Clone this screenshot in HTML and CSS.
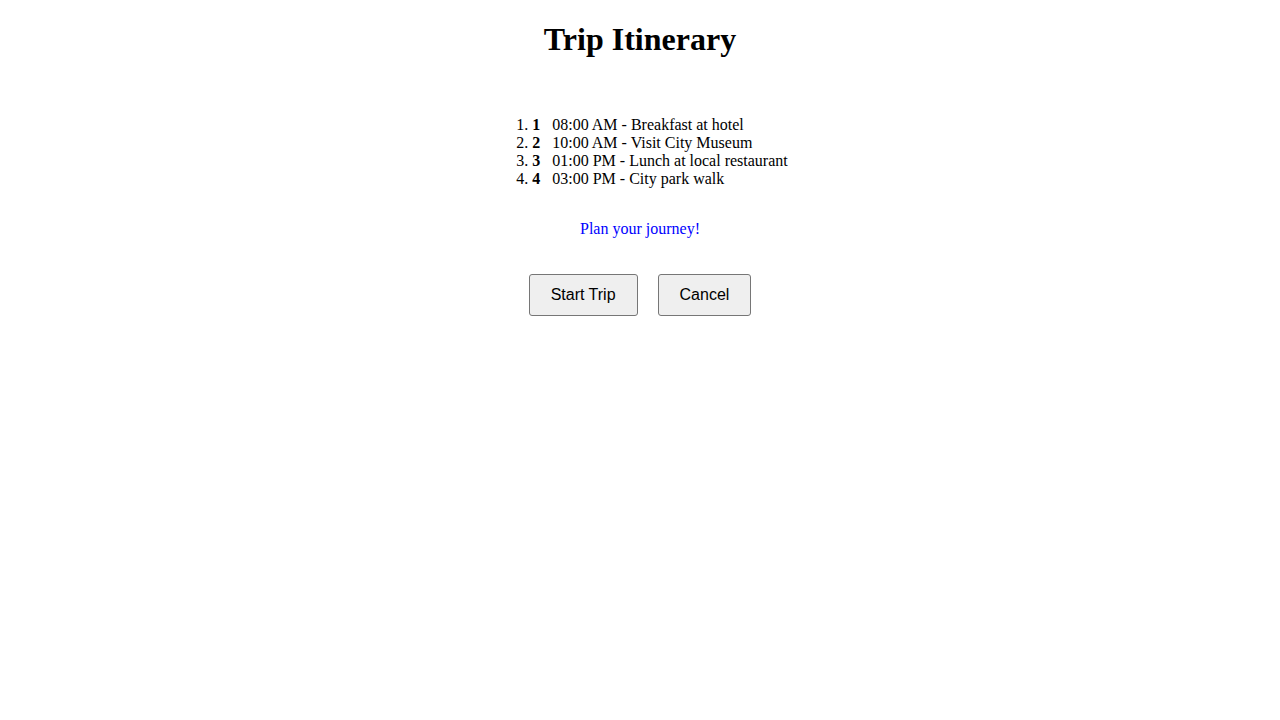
FILE: index.html
```html
<!DOCTYPE html>
<html>
<head>
<meta charset="utf-8">
<title>Trip Itinerary</title>
<link rel="stylesheet" href="styles.css">
</head>
<body>
<div class="page">
  <h1 class="title">Trip Itinerary</h1>
  <ol class="itinerary">
    <li><span class="num">1</span>08:00 AM - Breakfast at hotel</li>
    <li><span class="num">2</span>10:00 AM - Visit City Museum</li>
    <li><span class="num">3</span>01:00 PM - Lunch at local restaurant</li>
    <li><span class="num">4</span>03:00 PM - City park walk</li>
  </ol>
  <p class="note">Plan your journey!</p>
  <div class="actions">
    <button class="btn">Start Trip</button>
    <button class="btn">Cancel</button>
  </div>
</div>
</body>
</html>
```
FILE: styles.css
```css
html, body {
  background: #ffffff;
}
body {
  margin: 8px;
  font-family: "Liberation Serif", "Times New Roman", serif;
  font-size: 16px;
  color: #000000;
}
.page {
  text-align: center;
}
.title {
  font-size: 32px;
  font-weight: bold;
  margin: 13px 0 0;
  line-height: 37px;
}
.itinerary {
  display: inline-block;
  text-align: left;
  margin: 58px 0 0;
  padding-left: 40px;
  line-height: 18px;
}
.num {
  display: inline-block;
  width: 20px;
  font-weight: bold;
}
.note {
  color: #0000ff;
  margin: 32px 0 0;
  line-height: 18px;
}
.actions {
  display: flex;
  justify-content: center;
  gap: 20px;
  margin-top: 36px;
}
.btn {
  font-family: "Liberation Sans", Arial, sans-serif;
  font-size: 16px;
  line-height: 18px;
  padding: 11px 21px;
  background: #efefef;
  border: 1px solid #767676;
  border-radius: 3px;
  color: #000000;
}
```
